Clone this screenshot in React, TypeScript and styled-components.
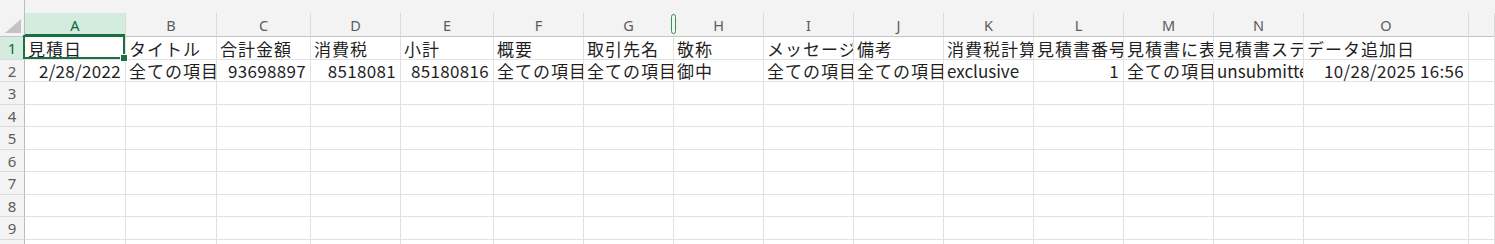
import React from 'react';
import styled, { createGlobalStyle, css } from 'styled-components';

const GlobalStyle = createGlobalStyle`
  html, body {
    margin: 0;
    padding: 0;
    background: #ffffff;
    overflow: hidden;
  }
  #root {
    width: 1495px;
    height: 244px;
    overflow: hidden;
  }
`;

type Align = 'left' | 'right';

interface Column {
  key: string;
  width: number;
}

const columns: Column[] = [
  { key: 'A', width: 101 },
  { key: 'B', width: 91 },
  { key: 'C', width: 94 },
  { key: 'D', width: 90 },
  { key: 'E', width: 93 },
  { key: 'F', width: 90 },
  { key: 'G', width: 90 },
  { key: 'H', width: 90 },
  { key: 'I', width: 90 },
  { key: 'J', width: 90 },
  { key: 'K', width: 90 },
  { key: 'L', width: 90 },
  { key: 'M', width: 90 },
  { key: 'N', width: 90 },
  { key: 'O', width: 165 },
];

interface CellData {
  text: string;
  align?: Align;
  cjk?: boolean;
}

const headerRow: CellData[] = [
  { text: '見積日', cjk: true },
  { text: 'タイトル', cjk: true },
  { text: '合計金額', cjk: true },
  { text: '消費税', cjk: true },
  { text: '小計', cjk: true },
  { text: '概要', cjk: true },
  { text: '取引先名', cjk: true },
  { text: '敬称', cjk: true },
  { text: 'メッセージ', cjk: true },
  { text: '備考', cjk: true },
  { text: '消費税計算方法', cjk: true },
  { text: '見積書番号', cjk: true },
  { text: '見積書に表示する項目', cjk: true },
  { text: '見積書ステータス', cjk: true },
  { text: 'データ追加日', cjk: true },
];

const dataRow: CellData[] = [
  { text: '2/28/2022', align: 'right' },
  { text: '全ての項目を入力', cjk: true },
  { text: '93698897', align: 'right' },
  { text: '8518081', align: 'right' },
  { text: '85180816', align: 'right' },
  { text: '全ての項目を入力', cjk: true },
  { text: '全ての項目を入力', cjk: true },
  { text: '御中', cjk: true },
  { text: '全ての項目を入力', cjk: true },
  { text: '全ての項目を入力', cjk: true },
  { text: 'exclusive' },
  { text: '1', align: 'right' },
  { text: '全ての項目を入力', cjk: true },
  { text: 'unsubmitted' },
  { text: '10/28/2025 16:56', align: 'right' },
];

const ROW_COUNT = 10;

const GREEN = '#1b7041';
const HEADER_BG = '#f3f3f3';
const HEADER_SEL_BG = '#d3ecdd';
const GRID = '#e1e1e1';

const Sheet = styled.div<{ $template: string }>`
  display: grid;
  grid-template-columns: ${(p) => p.$template};
  width: 1495px;
  font-family: 'Noto Sans CJK JP', 'Noto Sans', sans-serif;
`;

const Corner = styled.div`
  grid-row: span 2;
  position: relative;
  box-sizing: border-box;
  height: 37px;
  background: ${HEADER_BG};
  border-right: 1px solid #bcbcbc;
  border-bottom: 1px solid #c4c4c4;
`;

const CornerTriangle = styled.div`
  position: absolute;
  right: 3px;
  bottom: 3px;
  width: 0;
  height: 0;
  border-left: 16px solid transparent;
  border-bottom: 14px solid #c3c3c3;
`;

const TopStrip = styled.div`
  grid-column: 2 / -1;
  height: 13px;
  background: ${HEADER_BG};
`;

const ColumnHeader = styled.div<{ $selected?: boolean }>`
  position: relative;
  box-sizing: border-box;
  height: 24px;
  display: flex;
  align-items: center;
  justify-content: center;
  background: ${HEADER_BG};
  border-right: 1px solid #dadada;
  border-bottom: 1px solid #c4c4c4;
  font-family: 'Noto Sans', 'Open Sans', sans-serif;
  font-size: 14.5px;
  color: #5c5c5c;
  ${(p) =>
    p.$selected &&
    css`
      background: ${HEADER_SEL_BG};
      color: #11693a;
      box-shadow: inset 0 -2px 0 ${GREEN};
    `}
`;

const ResizeGrip = styled.div`
  position: absolute;
  left: -3px;
  top: 1px;
  width: 5px;
  height: 20px;
  box-sizing: border-box;
  border: 1.5px solid #3b8f5d;
  border-radius: 3px;
  background: #eef7f1;
`;

const RowHeader = styled.div<{ $h: number; $selected?: boolean }>`
  box-sizing: border-box;
  height: ${(p) => p.$h}px;
  display: flex;
  align-items: center;
  justify-content: center;
  background: ${(p) => (p.$selected ? HEADER_SEL_BG : HEADER_BG)};
  color: ${(p) => (p.$selected ? '#11693a' : '#5c5c5c')};
  border-right: 1px solid #bcbcbc;
  border-bottom: 1px solid #dadada;
  font-family: 'Noto Sans', 'Open Sans', sans-serif;
  font-size: 15px;
`;

const Cell = styled.div<{ $h: number }>`
  position: relative;
  box-sizing: border-box;
  height: ${(p) => p.$h}px;
  min-width: 0;
  border-right: 1px solid ${GRID};
  border-bottom: 1px solid ${GRID};
`;

const CellText = styled.div<{ $align?: Align; $cjk?: boolean }>`
  box-sizing: border-box;
  height: 100%;
  display: flex;
  align-items: center;
  justify-content: ${(p) => (p.$align === 'right' ? 'flex-end' : 'flex-start')};
  padding: ${(p) => (p.$align === 'right' ? '0 4px 0 0' : '0 0 0 3px')};
  overflow: hidden;
  white-space: nowrap;
  font-size: 17px;
  letter-spacing: ${(p) => (p.$cjk ? '1px' : p.$align === 'right' ? '0.3px' : '0')};
  color: #1f1f1f;
  line-height: 1;
`;

const Selection = styled.div`
  position: absolute;
  left: -2px;
  top: -2px;
  width: 102px;
  height: 24px;
  box-sizing: border-box;
  border: 2px solid ${GREEN};
  pointer-events: none;
  z-index: 2;
`;

const FillHandle = styled.div`
  position: absolute;
  left: 95px;
  top: 17px;
  width: 8px;
  height: 8px;
  box-sizing: border-box;
  background: ${GREEN};
  border: 1px solid #ffffff;
`;

const rowHeight = (row: number) => (row % 2 === 1 ? 23 : 22);

const cellFor = (row: number, col: number): CellData | undefined => {
  if (row === 1) return headerRow[col];
  if (row === 2) return dataRow[col];
  return undefined;
};

export default function App() {
  const template = `25px ${columns.map((c) => `${c.width}px`).join(' ')} 1fr`;
  const rows = Array.from({ length: ROW_COUNT }, (_, i) => i + 1);

  return (
    <>
      <GlobalStyle />
      <Sheet $template={template}>
        <Corner>
          <CornerTriangle />
        </Corner>
        <TopStrip />

        {columns.map((c) => (
          <ColumnHeader key={c.key} $selected={c.key === 'A'}>
            {c.key}
            {c.key === 'H' && <ResizeGrip />}
          </ColumnHeader>
        ))}
        <ColumnHeader />

        {rows.map((row) => {
          const h = rowHeight(row);
          return (
            <React.Fragment key={row}>
              <RowHeader $h={h} $selected={row === 1}>
                {row}
              </RowHeader>
              {columns.map((c, ci) => {
                const data = cellFor(row, ci);
                return (
                  <Cell key={c.key} $h={h}>
                    <CellText $align={data?.align} $cjk={data?.cjk}>
                      {data?.text}
                    </CellText>
                    {row === 1 && ci === 0 && (
                      <Selection>
                        <FillHandle />
                      </Selection>
                    )}
                  </Cell>
                );
              })}
              <Cell $h={h} />
            </React.Fragment>
          );
        })}
      </Sheet>
    </>
  );
}
